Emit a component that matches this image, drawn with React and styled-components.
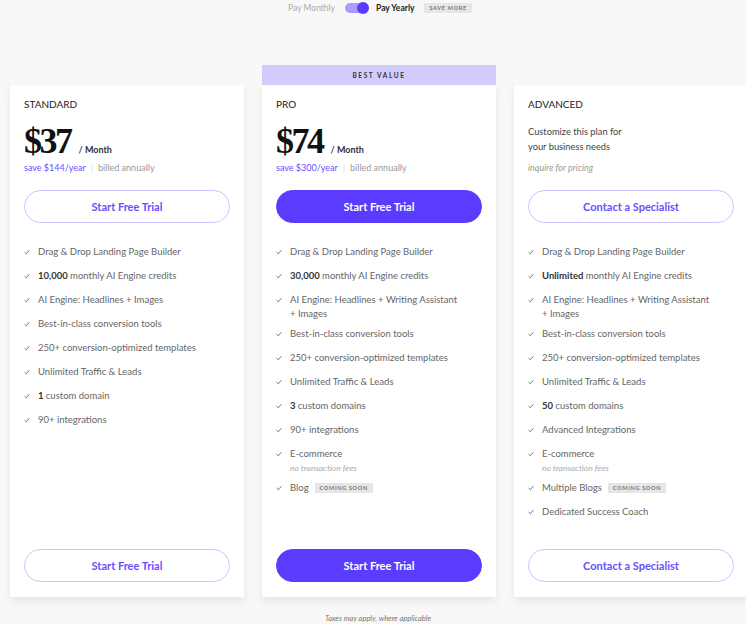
import React from "react";
import styled, { createGlobalStyle } from "styled-components";

const GlobalStyle = createGlobalStyle`
  html, body {
    margin: 0;
    padding: 0;
    background: #f8f8f8;
    font-family: "Lato", "Liberation Sans", sans-serif;
    color: #333;
  }
  * { box-sizing: border-box; }
`;

const Page = styled.div`
  width: 746px;
  height: 624px;
  overflow: hidden;
  padding-top: 1px;
`;

const Toggle = styled.div`
  display: flex;
  justify-content: center;
  align-items: center;
  gap: 8px;
  height: 14px;
  padding-left: 14px;
  font-size: 8.5px;

  .monthly {
    color: #aaa;
    margin-right: 2px;
  }
  .yearly {
    color: #222;
    font-weight: 700;
  }
`;

const Switch = styled.div`
  width: 23px;
  height: 10px;
  border-radius: 5px;
  background: #a99cff;
  position: relative;

  &::after {
    content: "";
    position: absolute;
    right: -1px;
    top: -1px;
    width: 12px;
    height: 12px;
    border-radius: 50%;
    background: #5b3cff;
  }
`;

const Tag = styled.span`
  display: inline-block;
  background: #e6e6e6;
  color: #777;
  font-size: 5.5px;
  font-weight: 700;
  letter-spacing: 0.7px;
  line-height: 8px;
  padding: 1px 5px;
  margin-left: ${(p) => p.gap || 0}px;
  vertical-align: 1px;
`;

const Plans = styled.div`
  display: grid;
  grid-template-columns: repeat(3, 234px);
  column-gap: 18px;
  padding: 0 0 0 10px;
  margin-top: 50px;
`;

const Column = styled.div`
  display: flex;
  flex-direction: column;
`;

const Ribbon = styled.div`
  height: 20px;
  background: ${(p) => (p.show ? "#d3cbfb" : "transparent")};
  color: #333;
  font-size: 6.5px;
  font-weight: 700;
  letter-spacing: 1.6px;
  display: flex;
  align-items: center;
  justify-content: center;
`;

const Card = styled.div`
  background: #fff;
  height: 512px;
  padding: 13px 14px 15px;
  display: flex;
  flex-direction: column;
  box-shadow: 0 4px 8px rgba(0, 0, 0, 0.08);
`;

const Title = styled.div`
  font-size: 10px;
  color: #222;
  line-height: 12px;
  height: 12px;
`;

const PriceRow = styled.div`
  display: flex;
  align-items: baseline;
  margin-top: 12px;
  height: 38px;
`;

const Price = styled.span`
  font-family: "Liberation Serif", "DejaVu Serif", serif;
  font-weight: 700;
  font-size: 36px;
  letter-spacing: -2.5px;
  color: #111;
  line-height: 38px;
`;

const Per = styled.span`
  font-size: 9px;
  font-weight: 700;
  color: #333;
  margin-left: 8px;
`;

const Note = styled.div`
  font-size: 9px;
  color: #999;
  margin-top: 2px;
  line-height: 12px;

  .save {
    color: #6a4eff;
  }
  .sep {
    color: #ddd;
    margin: 0 5px;
  }
`;

const Blurb = styled.div`
  font-size: 9.3px;
  color: #444;
  line-height: 15px;
  margin-top: 14px;
  height: 30px;
`;

const Inquire = styled.div`
  font-size: 9px;
  font-style: italic;
  color: #999;
  margin-top: 8px;
  line-height: 12px;
`;

const Button = styled.button`
  width: 100%;
  height: 33px;
  flex: none;
  border-radius: 17px;
  font-family: inherit;
  font-size: 11px;
  font-weight: 700;
  cursor: pointer;
  border: 1.5px solid ${(p) => (p.primary ? "#5b3cff" : "#cdc3ff")};
  background: ${(p) => (p.primary ? "#5b3cff" : "#fff")};
  color: ${(p) => (p.primary ? "#fff" : "#6a4eff")};
  margin-top: ${(p) => p.top || 0}px;
`;

const Features = styled.ul`
  list-style: none;
  padding: 0;
  margin: 22px 0 0;
  display: flex;
  flex-direction: column;
  gap: 6px;
`;

const Feature = styled.li`
  display: flex;
  gap: 8px;
  min-height: 18px;
  font-size: 9.5px;
  line-height: 14px;
  color: #666;

  b {
    color: #333;
    font-weight: 700;
  }
  svg {
    flex: none;
    margin-top: 4px;
  }
  div {
    max-width: 172px;
  }
  small {
    display: block;
    font-size: 8.5px;
    font-style: italic;
    color: #aaa;
    line-height: 14px;
  }
`;

const Spacer = styled.div`
  flex: 1;
`;

const Footer = styled.div`
  text-align: center;
  font-size: 7.5px;
  font-style: italic;
  color: #777;
  margin-top: 17px;
  padding-left: 10px;
`;

const Check = () => (
  <svg width="6" height="6" viewBox="0 0 6 6">
    <path d="M0.6 3.2 L2.3 4.8 L5.4 1.2" fill="none" stroke="#777" strokeWidth="1" />
  </svg>
);

const plans = [
  {
    name: "STANDARD",
    price: "$37",
    save: "save $144/year",
    cta: "Start Free Trial",
    features: [
      ["Drag & Drop Landing Page Builder"],
      ["monthly AI Engine credits", "10,000"],
      ["AI Engine: Headlines + Images"],
      ["Best-in-class conversion tools"],
      ["250+ conversion-optimized templates"],
      ["Unlimited Traffic & Leads"],
      ["custom domain", "1"],
      ["90+ integrations"],
    ],
  },
  {
    name: "PRO",
    price: "$74",
    save: "save $300/year",
    cta: "Start Free Trial",
    best: true,
    features: [
      ["Drag & Drop Landing Page Builder"],
      ["monthly AI Engine credits", "30,000"],
      ["AI Engine: Headlines + Writing Assistant + Images"],
      ["Best-in-class conversion tools"],
      ["250+ conversion-optimized templates"],
      ["Unlimited Traffic & Leads"],
      ["custom domains", "3"],
      ["90+ integrations"],
      ["E-commerce", null, "no transaction fees"],
      ["Blog", null, null, true],
    ],
  },
  {
    name: "ADVANCED",
    custom: true,
    cta: "Contact a Specialist",
    features: [
      ["Drag & Drop Landing Page Builder"],
      ["monthly AI Engine credits", "Unlimited"],
      ["AI Engine: Headlines + Writing Assistant + Images"],
      ["Best-in-class conversion tools"],
      ["250+ conversion-optimized templates"],
      ["Unlimited Traffic & Leads"],
      ["custom domains", "50"],
      ["Advanced Integrations"],
      ["E-commerce", null, "no transaction fees"],
      ["Multiple Blogs", null, null, true],
      ["Dedicated Success Coach"],
    ],
  },
];

const App = () => {
  return (
    <Page>
      <GlobalStyle />
      <Toggle>
        <span className="monthly">Pay Monthly</span>
        <Switch />
        <span className="yearly">Pay Yearly</span>
        <Tag gap={2}>SAVE MORE</Tag>
      </Toggle>

      <Plans>
        {plans.map((plan) => (
          <Column key={plan.name}>
            <Ribbon show={plan.best}>{plan.best ? "BEST VALUE" : ""}</Ribbon>
            <Card>
              <Title>{plan.name}</Title>
              {plan.custom ? (
                <>
                  <Blurb>
                    Customize this plan for
                    <br />
                    your business needs
                  </Blurb>
                  <Inquire>inquire for pricing</Inquire>
                </>
              ) : (
                <>
                  <PriceRow>
                    <Price>{plan.price}</Price>
                    <Per>/ Month</Per>
                  </PriceRow>
                  <Note>
                    <span className="save">{plan.save}</span>
                    <span className="sep">|</span>
                    billed annually
                  </Note>
                </>
              )}
              <Button primary={plan.best} top={16}>
                {plan.cta}
              </Button>
              <Features>
                {plan.features.map(([text, bold, sub, soon]) => (
                  <Feature key={text}>
                    <Check />
                    <div>
                      {bold && <b>{bold} </b>}
                      {text}
                      {soon && <Tag gap={6}>COMING SOON</Tag>}
                      {sub && <small>{sub}</small>}
                    </div>
                  </Feature>
                ))}
              </Features>
              <Spacer />
              <Button primary={plan.best}>{plan.cta}</Button>
            </Card>
          </Column>
        ))}
      </Plans>
      <Footer>Taxes may apply, where applicable</Footer>
    </Page>
  );
};

export default App;
